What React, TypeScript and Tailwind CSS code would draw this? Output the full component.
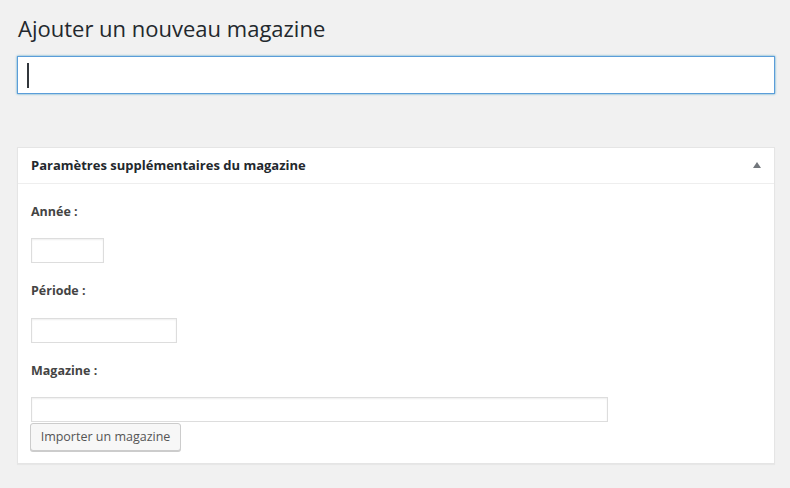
import React from "react";

export default function App() {
  const font = { fontFamily: '"Open Sans", "Noto Sans", sans-serif' };
  return (
    <div className="min-h-[488px] w-[790px] bg-[#f1f1f1] pl-[17px] pr-[15px] pt-[14px] text-[#23282d]" style={font}>
      <h1 className="text-[22px] leading-[29px] font-normal text-[#23282d] pl-[1px]">Ajouter un nouveau magazine</h1>
      <div className="mt-[13px] h-[38px] w-[758px] bg-white border border-[#5b9dd9] shadow-[0_0_2px_rgba(30,140,190,0.8)] flex items-center pl-[9px]">
        <span className="inline-block w-[2px] h-[25px] bg-[#32373c]" />
      </div>
      <div className="mt-[53px] w-[758px] bg-white border border-[#e5e5e5] shadow-[0_1px_1px_rgba(0,0,0,0.04)]">
        <div className="h-[36px] border-b border-[#eeeeee] flex items-center justify-between pl-[13px] pr-[13px]">
          <span className="text-[13px] font-bold text-[#23282d]">Paramètres supplémentaires du magazine</span>
          <svg width="8" height="6" viewBox="0 0 8 6" className="mb-[1px]">
            <polygon points="4,0 8,6 0,6" fill="#72777c" />
          </svg>
        </div>
        <div className="flex flex-col items-start pl-[13px] pb-[12px]">
          <div className="mt-[18px] h-[20px] leading-[20px] text-[12.5px] font-bold text-[#444]">Année :</div>
          <div className="mt-[16px] h-[25px] w-[73px] border border-[#dddddd] shadow-[inset_0_1px_2px_rgba(0,0,0,0.07)] bg-white" />
          <div className="mt-[18px] h-[20px] leading-[20px] text-[12.5px] font-bold text-[#444]">Période :</div>
          <div className="mt-[17px] h-[25px] w-[146px] border border-[#dddddd] shadow-[inset_0_1px_2px_rgba(0,0,0,0.07)] bg-white" />
          <div className="mt-[18px] h-[20px] leading-[20px] text-[12.5px] font-bold text-[#444]">Magazine :</div>
          <div className="mt-[16px] h-[25px] w-[577px] border border-[#dddddd] shadow-[inset_0_1px_2px_rgba(0,0,0,0.07)] bg-white" />
          <button className="mt-[1px] -ml-[1px] h-[28px] w-[151px] rounded-[3px] border border-[#cccccc] bg-[#f7f7f7] shadow-[0_1px_0_#cccccc] text-[12.5px] text-[#555] flex items-center justify-center">
            Importer un magazine
          </button>
        </div>
      </div>
    </div>
  );
}
